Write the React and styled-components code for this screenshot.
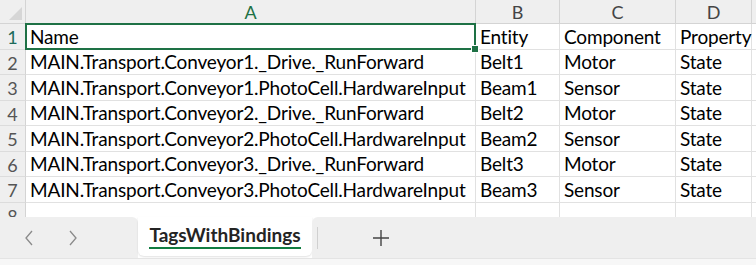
import React from 'react';
import styled, { createGlobalStyle } from 'styled-components';

const GlobalStyle = createGlobalStyle`
    html, body {
        margin: 0;
        padding: 0;
        background: #ffffff;
        overflow: hidden;
    }
    body {
        font-family: Lato, "Liberation Sans", sans-serif;
    }
`;

const columns = [
    { key: 'A', width: 450 },
    { key: 'B', width: 84 },
    { key: 'C', width: 116 },
    { key: 'D', width: 76 },
];

const rows = [
    ['Name', 'Entity', 'Component', 'Property'],
    ['MAIN.Transport.Conveyor1._Drive._RunForward', 'Belt1', 'Motor', 'State'],
    ['MAIN.Transport.Conveyor1.PhotoCell.HardwareInput', 'Beam1', 'Sensor', 'State'],
    ['MAIN.Transport.Conveyor2._Drive._RunForward', 'Belt2', 'Motor', 'State'],
    ['MAIN.Transport.Conveyor2.PhotoCell.HardwareInput', 'Beam2', 'Sensor', 'State'],
    ['MAIN.Transport.Conveyor3._Drive._RunForward', 'Belt3', 'Motor', 'State'],
    ['MAIN.Transport.Conveyor3.PhotoCell.HardwareInput', 'Beam3', 'Sensor', 'State'],
    ['', '', '', ''],
];

const Sheet = styled.div`
    width: 756px;
    height: 265px;
    display: flex;
    flex-direction: column;
    background: #ffffff;
`;

const Grid = styled.div`
    height: 217px;
    overflow: hidden;
    display: grid;
    grid-template-columns: 26px ${columns.map(c => c.width + 'px').join(' ')} 1fr;
    grid-template-rows: 24px;
    grid-auto-rows: 25.5px;
`;

const Corner = styled.div`
    background: #efefef;
    border-right: 1px solid #d4d4d4;
    border-bottom: 1px solid #d4d4d4;
    display: flex;
    align-items: flex-end;
    justify-content: flex-end;
    padding: 0 3px 3px 0;
`;

const ColHead = styled.div`
    background: #efefef;
    border-right: 1px solid #d4d4d4;
    border-bottom: 1px solid ${p => p.$active ? '#c9c9c9' : '#d4d4d4'};
    display: flex;
    align-items: center;
    justify-content: center;
    font-size: 18px;
    color: ${p => p.$active ? '#1e7145' : '#444444'};
    padding-top: 1px;
`;

const RowHead = styled.div`
    background: #efefef;
    border-right: 1px solid #d4d4d4;
    border-bottom: 1px solid #dcdcdc;
    display: flex;
    align-items: center;
    justify-content: center;
    font-size: 18px;
    color: ${p => p.$active ? '#1e6b5a' : '#555555'};
    padding-top: 2px;
`;

const Cell = styled.div`
    position: relative;
    border-right: 1px solid #e1e1e1;
    border-bottom: 1px solid #e1e1e1;
    display: flex;
    align-items: flex-end;
    padding: 0 0 1px 4px;
    font-size: 19px;
    letter-spacing: -0.17px;
    color: #000000;
    white-space: nowrap;
    overflow: visible;
`;

const Selection = styled.div`
    position: absolute;
    left: -1px;
    top: -1px;
    right: -1px;
    bottom: -1px;
    border: 2px solid #1e7145;
    pointer-events: none;
    z-index: 2;
`;

const FillHandle = styled.div`
    position: absolute;
    right: -5px;
    bottom: -5px;
    width: 6px;
    height: 6px;
    background: #1e7145;
    border: 1px solid #ffffff;
`;

const TabBar = styled.div`
    flex: 1;
    display: flex;
    align-items: stretch;
`;

const NavArea = styled.div`
    width: 138px;
    background: #efefef;
    border-top-right-radius: 6px;
    display: flex;
    align-items: center;
    padding-left: 22px;
    gap: 30px;
    box-sizing: border-box;
`;

const NavButton = styled.div`
    width: 14px;
    height: 20px;
    display: flex;
    align-items: center;
    justify-content: center;
`;

const Tab = styled.div`
    width: 174px;
    background: #ffffff;
    border-bottom-left-radius: 6px;
    border-bottom-right-radius: 6px;
    box-shadow: 0 1px 2px rgba(0, 0, 0, 0.12);
    display: flex;
    align-items: center;
    justify-content: center;
    margin-bottom: 2px;
`;

const TabLabel = styled.span`
    font-size: 19px;
    font-weight: 700;
    color: #242424;
    padding-bottom: 2px;
    border-bottom: 2.5px solid #107c41;
    line-height: 20px;
`;

const RestArea = styled.div`
    flex: 1;
    background: #efefef;
    border-top-left-radius: 6px;
    display: flex;
    align-items: center;
    padding-left: 5px;
`;

const Divider = styled.div`
    width: 1px;
    height: 22px;
    background: #d0d0d0;
`;

const AddButton = styled.div`
    margin-left: 53px;
    width: 20px;
    height: 20px;
    display: flex;
    align-items: center;
    justify-content: center;
`;

const StatusStrip = styled.div`
    height: 6px;
    background: #f7f7f7;
    border-top: 1px solid #e4e4e4;
`;

const Chevron = ({ dir }) => (
    <svg width="10" height="16" viewBox="0 0 10 16">
        <path
            d={dir === 'left' ? 'M8 1 L2 8 L8 15' : 'M2 1 L8 8 L2 15'}
            fill="none"
            stroke="#8a8a8a"
            strokeWidth="1.3"
        />
    </svg>
);

const App = () => {
    return (
        <Sheet>
            <GlobalStyle />
            <Grid>
                <Corner>
                    <svg width="13" height="13" viewBox="0 0 13 13">
                        <path d="M13 0 L13 13 L0 13 Z" fill="#d6d6d6" />
                    </svg>
                </Corner>
                {columns.map(c => (
                    <ColHead key={c.key} $active={c.key === 'A'}>{c.key}</ColHead>
                ))}
                <ColHead />
                {rows.map((row, i) => (
                    <React.Fragment key={i}>
                        <RowHead $active={i === 0}>{i + 1}</RowHead>
                        {row.map((val, j) => (
                            <Cell key={j}>
                                {val}
                                {i === 0 && j === 0 && (
                                    <Selection>
                                        <FillHandle />
                                    </Selection>
                                )}
                            </Cell>
                        ))}
                        <Cell />
                    </React.Fragment>
                ))}
            </Grid>
            <TabBar>
                <NavArea>
                    <NavButton><Chevron dir="left" /></NavButton>
                    <NavButton><Chevron dir="right" /></NavButton>
                </NavArea>
                <Tab>
                    <TabLabel>TagsWithBindings</TabLabel>
                </Tab>
                <RestArea>
                    <Divider />
                    <AddButton>
                        <svg width="18" height="18" viewBox="0 0 18 18">
                            <path d="M9 1 V17 M1 9 H17" stroke="#444444" strokeWidth="1.4" />
                        </svg>
                    </AddButton>
                </RestArea>
            </TabBar>
            <StatusStrip />
        </Sheet>
    );
};

export default App;
